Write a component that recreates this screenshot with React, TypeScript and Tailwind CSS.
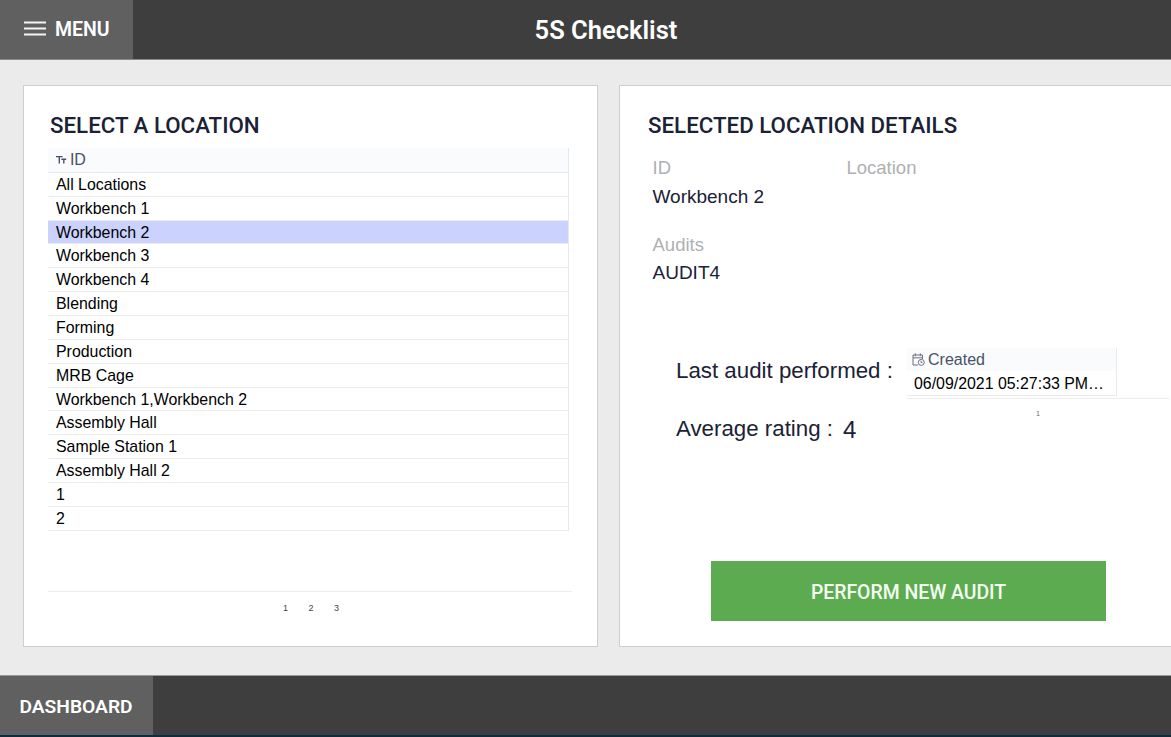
import React from "react";

const locations = [
  "All Locations",
  "Workbench 1",
  "Workbench 2",
  "Workbench 3",
  "Workbench 4",
  "Blending",
  "Forming",
  "Production",
  "MRB Cage",
  "Workbench 1,Workbench 2",
  "Assembly Hall",
  "Sample Station 1",
  "Assembly Hall 2",
  "1",
  "2",
];

function TextTypeIcon() {
  return (
    <svg width="11" height="9" viewBox="0 0 11 9" fill="none" stroke="#4a5168" strokeWidth="1.4">
      <path d="M0 1.6H6.6M3.3 1.6V8.5" />
      <path d="M5.4 4.2H10.2M7.8 4.2V8.5" />
    </svg>
  );
}

function DateTypeIcon() {
  return (
    <svg width="13" height="13" viewBox="0 0 13 13" fill="none" stroke="#6b7184" strokeWidth="1">
      <path d="M6 12H1V2H10.5V6M1 4.8H10.5M3.3 0.3V3.2M8.3 0.3V3.2" />
      <circle cx="9.3" cy="9.4" r="3" />
      <path d="M9.1 7.8V9.6H10.5" />
    </svg>
  );
}

export default function App() {
  return (
    <div className="w-full h-[737px] flex flex-col overflow-hidden bg-[#ebebeb] font-['Liberation_Sans',sans-serif] text-[#1b2136]">
      {/* HEADER */}
      <header className="h-[60px] shrink-0 grid grid-cols-[133px_1fr_92px] bg-[#3e3e3e] border-b border-[#8a8a8a] font-['Roboto',sans-serif] text-white">
        <button className="h-full flex items-center gap-[10px] pl-[24px] pb-[2px] bg-[#606060]">
          <svg width="22" height="16" viewBox="0 0 22 16" stroke="#f4f4f4" strokeWidth="2.2">
            <path d="M0 1.5H22M0 7.5H22M0 13.5H22" />
          </svg>
          <span className="-ml-px pt-[2px] text-[19.5px] leading-none font-semibold">MENU</span>
        </button>
        <h1 className="pt-[2px] flex items-center justify-center text-[25.5px] leading-none font-semibold">5S Checklist</h1>
      </header>

      {/* PANELS */}
      <main className="h-[615px] shrink-0 flex gap-[21px] pt-[25px] pl-[23px]">
        <section className="w-[575px] h-[562px] shrink-0 bg-white border border-[#cfcfcf] pl-[24px]">
          <h2 className="mt-[26px] ml-[2px] text-[22.3px] leading-[26px] font-medium font-['Roboto',sans-serif]">SELECT A LOCATION</h2>
          <div className="mt-[10px] w-[521px] border-r border-[#e6e8ee]">
            <div className="h-[24.8px] flex items-center gap-[3px] pl-[8px] bg-[#f9fbfd] border-b border-[#e6e9ee] text-[#4a5168]">
              <TextTypeIcon />
              <span className="text-[16px] leading-none tracking-[-0.3px]">ID</span>
            </div>
            {locations.map((name) => (
              <div
                key={name}
                className={`h-[23.86px] pl-[8px] border-b border-[#ebebeb] text-[15.9px] leading-[23px] text-black ${name === "Workbench 2" ? "bg-[#cbd2fe]" : "bg-white"}`}
              >
                {name}
              </div>
            ))}
          </div>
          <div className="mt-[60px] w-[524px] border-t border-[#ededed] pt-[11px] pl-[2px] flex justify-center gap-[20.5px] text-[9px] leading-[11px] text-[#444]">
            <span>1</span>
            <span>2</span>
            <span>3</span>
          </div>
        </section>

        <section className="w-[575px] h-[562px] shrink-0 bg-white border border-[#cfcfcf]">
          <h2 className="mt-[26px] ml-[28px] text-[22.3px] leading-[26px] font-medium font-['Roboto',sans-serif]">SELECTED LOCATION DETAILS</h2>
          <div className="mt-[19px] ml-[32.5px] grid grid-cols-[194px_1fr]">
            <div>
              <p className="text-[18.5px] leading-[22px] text-[#aeb0b3]">ID</p>
              <p className="mt-[7px] text-[19px] leading-[22px]">Workbench 2</p>
            </div>
            <p className="text-[18.5px] leading-[22px] text-[#aeb0b3]">Location</p>
          </div>
          <div className="mt-[26px] ml-[32.5px]">
            <p className="text-[18.5px] leading-[22px] text-[#aeb0b3]">Audits</p>
            <p className="mt-[6px] text-[19px] leading-[22px]">AUDIT4</p>
          </div>

          <div className="mt-[64px] ml-[56px] flex h-[70px]">
            <p className="w-[231px] mt-[9px] text-[22.3px] leading-[28px] whitespace-nowrap">Last audit performed :</p>
            <div className="w-[262px]">
              <div className="w-[210px] border-r border-b border-[#e8eaee]">
                <div className="h-[23px] flex items-center gap-[3px] pl-[5px] bg-[#f9fbfd] text-[#4a5168]">
                  <DateTypeIcon />
                  <span className="text-[16px] leading-none">Created</span>
                </div>
                <p className="h-[24px] pl-[7px] text-[15.9px] leading-[26px] text-black whitespace-nowrap">06/09/2021 05:27:33 PM…</p>
              </div>
              <p className="mt-[2px] pt-[9px] border-t border-[#ededed] text-center text-[8px] leading-[11px] text-[#777]">1</p>
            </div>
          </div>
          <div className="-mt-[3px] ml-[56px] flex gap-[10px] text-[22.3px] leading-[28px]">
            <span>Average rating :</span>
            <span className="mt-px text-[24px]">4</span>
          </div>

          <button className="mt-[117px] ml-[91px] pt-[4px] w-[395px] h-[60px] flex items-center justify-center bg-[#5dab51] text-[19.4px] font-medium font-['Roboto',sans-serif] text-[#f4fff2]">
            PERFORM NEW AUDIT
          </button>
        </section>
      </main>

      {/* FOOTER */}
      <footer className="h-[62px] shrink-0 flex bg-[#3e3e3e] border-t border-t-[#9a9a9a] border-b-2 border-b-[#0d2c42] font-['Roboto',sans-serif] text-white">
        <button className="w-[153px] h-full pt-[3px] pl-[19.5px] text-left text-[19.2px] font-semibold bg-[#606060]">DASHBOARD</button>
      </footer>
    </div>
  );
}
